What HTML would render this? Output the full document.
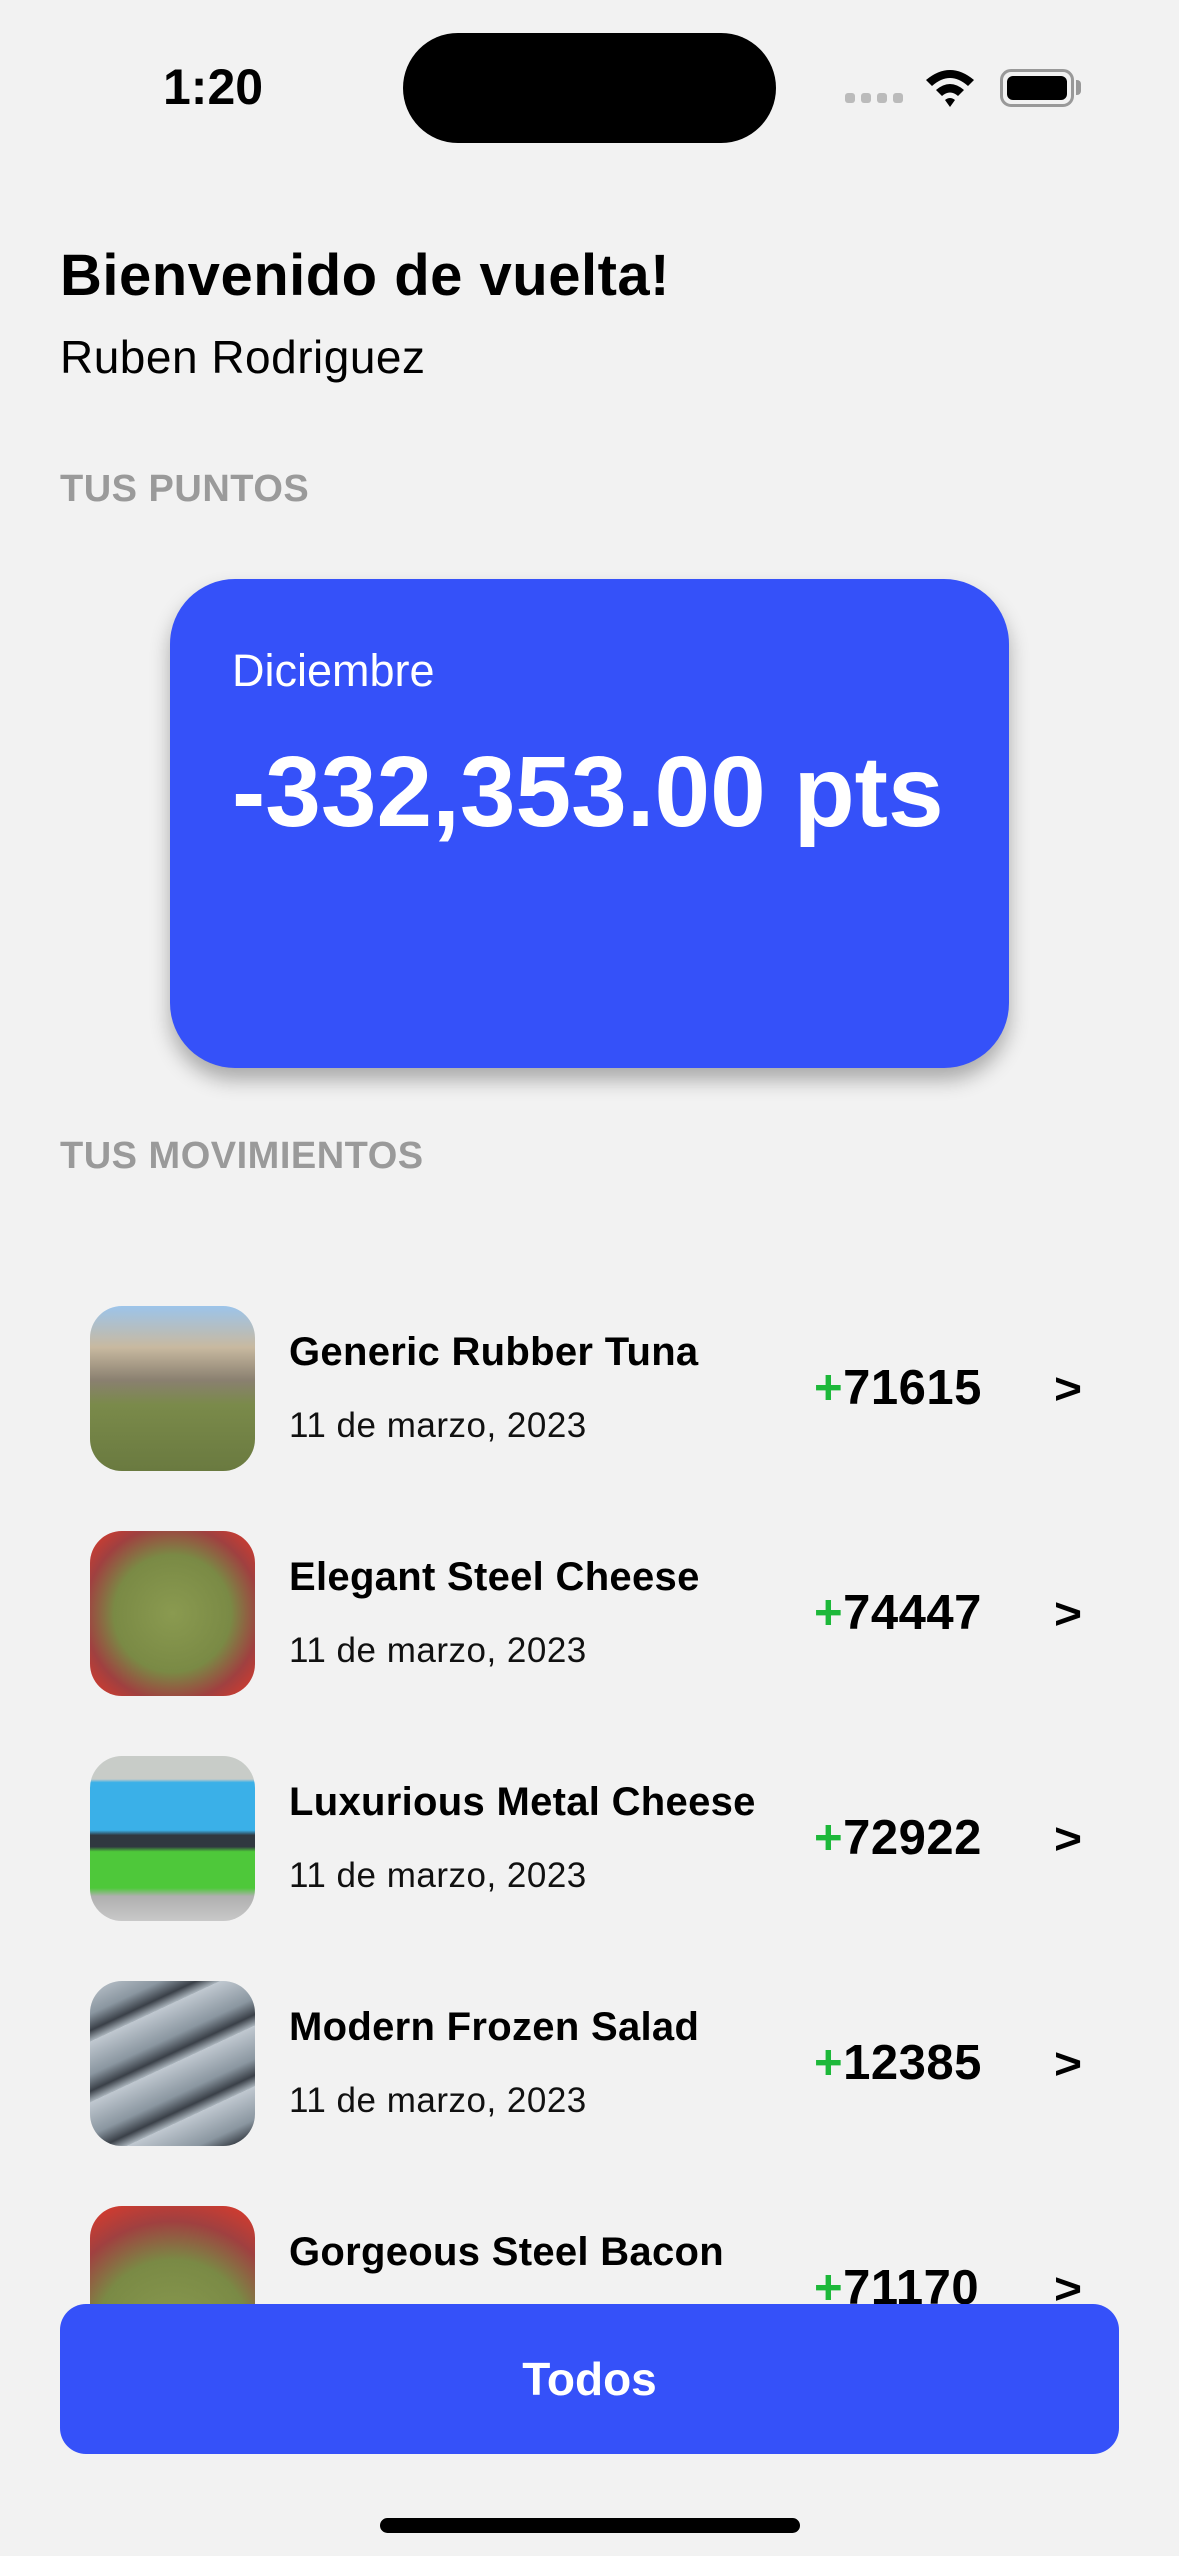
<!DOCTYPE html>
<html><head><meta charset="utf-8"><style>
*{margin:0;padding:0;box-sizing:border-box}
body{width:1179px;height:2556px;background:#f2f2f2;font-family:"Liberation Sans",sans-serif;position:relative;overflow:hidden;color:#000}
.a{position:absolute;white-space:nowrap}
.img{position:absolute;left:90px;width:165px;height:165px;border-radius:32px;overflow:hidden}
.t{position:absolute;left:289px;font-size:40px;font-weight:bold;letter-spacing:0.3px}
.d{position:absolute;left:289px;font-size:35px;color:#111;letter-spacing:0.5px}
.p{position:absolute;left:814px;font-size:49px;font-weight:bold;letter-spacing:0.5px}
.p b{color:#1db83a}
.c{position:absolute;left:1054px;font-size:48px;font-weight:bold;transform:scaleY(0.9)}
</style></head><body>
<div class="a" style="left:163px;top:58px;font-size:50px;font-weight:bold">1:20</div>
<div class="a" style="left:403px;top:33px;width:373px;height:110px;background:#000;border-radius:55px"></div>
<div class="a" style="left:845px;top:93px;width:60px;height:10px">
<span style="position:absolute;left:0;width:10px;height:10px;border-radius:3px;background:#bbb"></span>
<span style="position:absolute;left:16px;width:10px;height:10px;border-radius:3px;background:#bbb"></span>
<span style="position:absolute;left:32px;width:10px;height:10px;border-radius:3px;background:#bbb"></span>
<span style="position:absolute;left:48px;width:10px;height:10px;border-radius:3px;background:#bbb"></span></div>
<svg class="a" style="left:924px;top:66px" width="52" height="42" viewBox="0 0 52 42"><path d="M2 14 Q26 -6 50 14 L44 20 Q26 4 8 20Z M12 24 Q26 12 40 24 L34 30 Q26 23 18 30Z M21 34 Q26 30 31 34 L26 41Z" fill="#000"/></svg>
<div class="a" style="left:1000px;top:69px;width:74px;height:38px;border:3px solid #999;border-radius:11px;padding:4px"><div style="width:100%;height:100%;background:#000;border-radius:6px"></div></div>
<div class="a" style="left:1076px;top:80px;width:5px;height:15px;background:#999;border-radius:0 4px 4px 0"></div>

<div class="a" style="left:60px;top:242px;font-size:58px;font-weight:bold;letter-spacing:0.5px">Bienvenido de vuelta!</div>
<div class="a" style="left:60px;top:330px;font-size:46px;letter-spacing:0.5px">Ruben Rodriguez</div>
<div class="a" style="left:60px;top:468px;font-size:38px;font-weight:bold;color:#9a9a9a;letter-spacing:0.5px">TUS PUNTOS</div>

<div class="a" style="left:170px;top:579px;width:839px;height:489px;background:#3551f9;border-radius:65px;box-shadow:0 12px 20px rgba(0,0,0,0.3)"></div>
<div class="a" style="left:232px;top:645px;font-size:45px;color:#fff">Diciembre</div>
<div class="a" style="left:232px;top:735px;font-size:100px;font-weight:bold;color:#fff">-332,353.00 pts</div>

<div class="a" style="left:60px;top:1135px;font-size:38px;font-weight:bold;color:#9a9a9a;letter-spacing:0.5px">TUS MOVIMIENTOS</div>

<div class="img" style="top:1306px;background:linear-gradient(#9cc4ea 0%,#c8b9a0 25%,#8a8070 45%,#7a8a4a 60%,#6a7a40 100%)"></div>
<div class="t" style="top:1330px">Generic Rubber Tuna</div>
<div class="d" style="top:1406px">11 de marzo, 2023</div>
<div class="p" style="top:1360px"><b>+</b>71615</div><div class="c" style="top:1362px">&gt;</div>

<div class="img" style="top:1531px;background:radial-gradient(circle,#8a9a50 0%,#7a8a45 50%,#a04040 75%,#e03a2a 100%)"></div>
<div class="t" style="top:1555px">Elegant Steel Cheese</div>
<div class="d" style="top:1631px">11 de marzo, 2023</div>
<div class="p" style="top:1585px"><b>+</b>74447</div><div class="c" style="top:1587px">&gt;</div>

<div class="img" style="top:1756px;background:linear-gradient(#c8ccc8 0%,#c8ccc8 14%,#3ab0e8 16%,#3ab0e8 45%,#303840 48%,#303840 55%,#4ec83a 58%,#4ec83a 80%,#b0b0b0 85%,#c8c8c8 100%)"></div>
<div class="t" style="top:1780px">Luxurious Metal Cheese</div>
<div class="d" style="top:1856px">11 de marzo, 2023</div>
<div class="p" style="top:1810px"><b>+</b>72922</div><div class="c" style="top:1812px">&gt;</div>

<div class="img" style="top:1981px;background:repeating-linear-gradient(155deg,#c0c8d0 0px,#8a96a0 30px,#3a4048 45px,#aab4bc 55px)"></div>
<div class="t" style="top:2005px">Modern Frozen Salad</div>
<div class="d" style="top:2081px">11 de marzo, 2023</div>
<div class="p" style="top:2035px"><b>+</b>12385</div><div class="c" style="top:2037px">&gt;</div>

<div class="img" style="top:2206px;background:radial-gradient(circle at 50% 80%,#8a9a50 0%,#7a8a45 50%,#a04040 75%,#e03a2a 100%)"></div>
<div class="t" style="top:2230px">Gorgeous Steel Bacon</div>
<div class="p" style="top:2260px"><b>+</b>71170</div><div class="c" style="top:2262px">&gt;</div>

<div class="a" style="left:60px;top:2304px;width:1059px;height:150px;background:#3551f9;border-radius:26px;color:#fff;font-size:46px;font-weight:bold;text-align:center;line-height:150px">Todos</div>
<div class="a" style="left:380px;top:2518px;width:420px;height:15px;background:#000;border-radius:8px"></div>
</body></html>
